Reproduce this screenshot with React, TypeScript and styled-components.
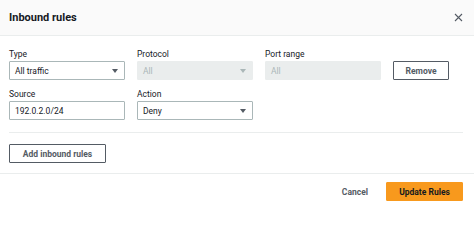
import React from "react";
import styled, { createGlobalStyle } from "styled-components";

const Global = createGlobalStyle`
  html, body { margin: 0; padding: 0; background: #ffffff; }
  body { font-family: Roboto, "Open Sans", "Liberation Sans", Arial, sans-serif; color: #16191f; }
  * { box-sizing: border-box; }
`;

const Modal = styled.div`
  width: 474px;
  height: 207px;
  background: #ffffff;
  display: flex;
  flex-direction: column;
`;

const Header = styled.div`
  height: 36px;
  background: #fafafa;
  border-bottom: 1px solid #eaeded;
  display: flex;
  align-items: center;
  justify-content: space-between;
  padding: 0 11px 0 9px;
`;

const Title = styled.h2`
  margin: 0;
  font-size: 11px;
  font-weight: 700;
  color: #16191f;
`;

const Close = styled.button`
  border: 0;
  background: transparent;
  padding: 0;
  width: 10px;
  height: 10px;
  display: flex;
  align-items: center;
  justify-content: center;
`;

const Body = styled.div`
  padding: 11px 11px 0 9px;
  display: flex;
  flex-direction: column;
  align-items: stretch;
`;

const Grid = styled.div`
  display: grid;
  grid-template-columns: 116px 116px 116px auto;
  column-gap: 12px;
  row-gap: 7px;
  align-items: end;
`;

const Field = styled.div`
  display: flex;
  flex-direction: column;
`;

const Label = styled.label`
  font-size: 8.5px;
  line-height: 14px;
  color: #16191f;
`;

const Box = styled.div<{ $disabled?: boolean }>`
  height: 19px;
  border: 1px solid ${(p) => (p.$disabled ? "#eaeded" : "#aab7b8")};
  background: ${(p) => (p.$disabled ? "#eaeded" : "#ffffff")};
  color: ${(p) => (p.$disabled ? "#aab7b8" : "#16191f")};
  border-radius: 1px;
  font-size: 8.5px;
  display: flex;
  align-items: center;
  justify-content: space-between;
  padding: 0 5px 0 5px;
`;

const Caret = styled.span<{ $disabled?: boolean }>`
  width: 0;
  height: 0;
  border-left: 3.5px solid transparent;
  border-right: 3.5px solid transparent;
  border-top: 4px solid ${(p) => (p.$disabled ? "#aab7b8" : "#545b64")};
  margin-right: 1px;
`;

const Button = styled.button<{ $primary?: boolean; $plain?: boolean }>`
  display: flex;
  align-items: center;
  justify-content: center;
  height: 19px;
  padding: 0 12px;
  font-family: inherit;
  font-size: 8.5px;
  font-weight: 700;
  border-radius: 1px;
  white-space: nowrap;
  cursor: pointer;
  border: 1px solid
    ${(p) => (p.$primary ? "#f8991d" : p.$plain ? "transparent" : "#545b64")};
  background: ${(p) => (p.$primary ? "#f8991d" : "#ffffff")};
  color: ${(p) => (p.$primary ? "#16191f" : "#545b64")};
`;

const RemoveButton = styled(Button)`
  width: 56px;
  padding: 0;
`;

const AddButton = styled(Button)`
  align-self: flex-start;
  width: 97px;
  padding: 0;
`;

const CancelButton = styled(Button)`
  padding: 0;
`;

const UpdateButton = styled(Button)`
  width: 77px;
  padding: 0;
`;

const Divider = styled.hr`
  width: 100%;
  margin: 12px 0 11px 0;
  border: 0;
  border-top: 1px solid #eaeded;
`;

const Footer = styled.div`
  margin-top: 10px;
  border-top: 1px solid #eaeded;
  display: flex;
  justify-content: flex-end;
  align-items: center;
  gap: 17px;
  padding: 8px 11px 0 9px;
`;

export default function App() {
  return (
    <>
      <Global />
      <Modal>
        <Header>
          <Title>Inbound rules</Title>
          <Close aria-label="Close">
            <svg width="9" height="9" viewBox="0 0 9 9">
              <path d="M1 1 L8 8 M8 1 L1 8" stroke="#545b64" strokeWidth="1.1" fill="none" />
            </svg>
          </Close>
        </Header>
        <Body>
          <Grid>
            <Field>
              <Label>Type</Label>
              <Box>
                All traffic
                <Caret />
              </Box>
            </Field>
            <Field>
              <Label>Protocol</Label>
              <Box $disabled>
                All
                <Caret $disabled />
              </Box>
            </Field>
            <Field>
              <Label>Port range</Label>
              <Box $disabled>All</Box>
            </Field>
            <RemoveButton>Remove</RemoveButton>
            <Field>
              <Label>Source</Label>
              <Box>192.0.2.0/24</Box>
            </Field>
            <Field>
              <Label>Action</Label>
              <Box>
                Deny
                <Caret />
              </Box>
            </Field>
          </Grid>
          <Divider />
          <AddButton>Add inbound rules</AddButton>
        </Body>
        <Footer>
          <CancelButton $plain>Cancel</CancelButton>
          <UpdateButton $primary>Update Rules</UpdateButton>
        </Footer>
      </Modal>
    </>
  );
}
